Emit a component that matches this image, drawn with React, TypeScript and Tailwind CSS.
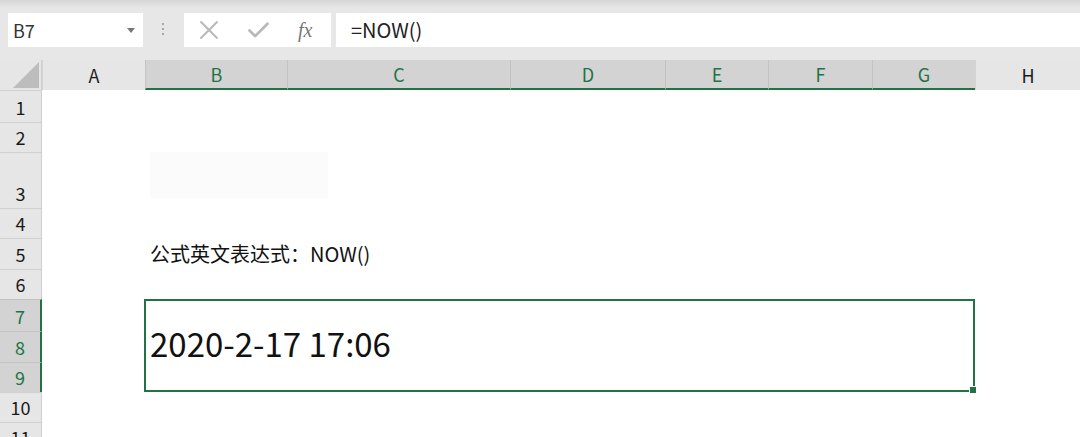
import { X, Check } from "lucide-react";

const cols = [
  { label: "A", sel: false },
  { label: "B", sel: true },
  { label: "C", sel: true },
  { label: "D", sel: true },
  { label: "E", sel: true },
  { label: "F", sel: true },
  { label: "G", sel: true },
  { label: "H", sel: false },
];

const rows = [
  { n: 1, sel: false },
  { n: 2, sel: false },
  { n: 3, sel: false },
  { n: 4, sel: false },
  { n: 5, sel: false },
  { n: 6, sel: false },
  { n: 7, sel: true },
  { n: 8, sel: true },
  { n: 9, sel: true },
  { n: 10, sel: false },
  { n: 11, sel: false },
];

const font = "font-['Noto_Sans_CJK_SC','Noto_Sans',sans-serif]";

function Toolbar() {
  return (
    <div className="h-[60px] bg-[#e7e7e7] bg-gradient-to-b from-[#d6d6d6] from-[0px] to-[#e7e7e7] to-[8px] flex items-start pt-[13px]">
      <div className="ml-[8px] w-[135px] h-[34px] bg-white flex items-center justify-between pl-[5px] pr-[8px]">
        <span className="text-[18px] text-[#333]">B7</span>
        <span className="w-0 h-0 border-l-[4px] border-r-[4px] border-t-[5px] border-l-transparent border-r-transparent border-t-[#777]" />
      </div>
      <div className="ml-[19px] mt-[10px] flex flex-col gap-[3px] w-[3px]">
        <span className="w-[2px] h-[2px] bg-[#a8a8a8]" />
        <span className="w-[2px] h-[2px] bg-[#a8a8a8]" />
        <span className="w-[2px] h-[2px] bg-[#a8a8a8]" />
      </div>
      <div className="ml-[19px] w-[147px] h-[34px] bg-white flex items-center">
        <X className="ml-[9px] w-[32px] h-[32px] text-[#b8b8b8]" strokeWidth={1.4} />
        <Check className="ml-[20px] w-[27px] h-[27px] text-[#b8b8b8]" strokeWidth={2.4} />
        <span className="ml-[26px] text-[20px] italic text-[#777] font-['Liberation_Serif',serif]">fx</span>
      </div>
      <div className="ml-[5px] flex-1 h-[34px] bg-white flex items-center pl-[15px]">
        <span className="text-[20px] text-[#222]">=NOW()</span>
      </div>
    </div>
  );
}

export default function App() {
  return (
    <div className={`w-[1080px] h-[437px] overflow-hidden bg-white ${font}`}>
      <Toolbar />
      <div className="grid grid-cols-[42px_103px_142px_223px_155px_103px_104px_103px_1fr] grid-rows-[30px_32px_30px_56px_30px_31px_30px_32px_31px_30px_30px_30px]">
        {/* corner */}
        <div className="bg-[#e6e6e6] border-r border-[#cfcfcf] flex items-end justify-end pr-[2px] pb-[2px]">
          <svg width="26" height="26" viewBox="0 0 26 26">
            <polygon points="26,0 26,26 0,26" fill="#bdbdbd" />
          </svg>
        </div>
        {cols.map((c) => (
          <div
            key={c.label}
            className={
              c.sel
                ? "bg-[#d3d3d3] border-l border-[#c3c3c3] border-b-2 border-b-[#217346] flex items-center justify-center text-[18px] text-[#217346]"
                : "bg-[#e6e6e6] border-l border-[#d4d4d4] flex items-center justify-center text-[18px] text-[#1a1a1a]"
            }
          >
            {c.label}
          </div>
        ))}

        {rows.map((r) => (
          <div
            key={r.n}
            style={{ gridColumn: 1, gridRow: r.n + 1 }}
            className={
              r.sel
                ? "bg-[#d3d3d3] border-t border-[#c3c3c3] border-r-2 border-r-[#217346] flex items-end justify-center pb-[2px] text-[18px] text-[#217346] leading-[26px]"
                : "bg-[#e6e6e6] border-t border-[#d0d0d0] border-r border-r-[#cfcfcf] flex items-end justify-center pb-[2px] text-[18px] text-[#1a1a1a] leading-[26px]"
            }
          >
            {r.n}
          </div>
        ))}

        {/* faint block in B3 */}
        <div className="col-start-3 col-span-2 row-start-4 pl-[5px] pb-[10px]">
          <div className="w-[178px] h-full bg-[#fbfbfb]" />
        </div>

        {/* B5 label */}
        <div className="col-start-3 col-span-3 row-start-6 flex items-center pl-[5px] text-[20px] text-[#111] whitespace-nowrap">
          公式英文表达式：NOW()
        </div>

        {/* merged selection B7:G9 */}
        <div className="col-start-3 col-span-6 row-start-8 row-span-3 relative -ml-px border-2 border-[#217346] flex items-center pl-[4px] pb-[4px]">
          <span className="text-[33px] text-[#111]">2020-2-17 17:06</span>
          <span className="absolute -right-[4px] -bottom-[4px] w-[6px] h-[6px] bg-[#217346] border border-white box-content" />
        </div>
      </div>
    </div>
  );
}
